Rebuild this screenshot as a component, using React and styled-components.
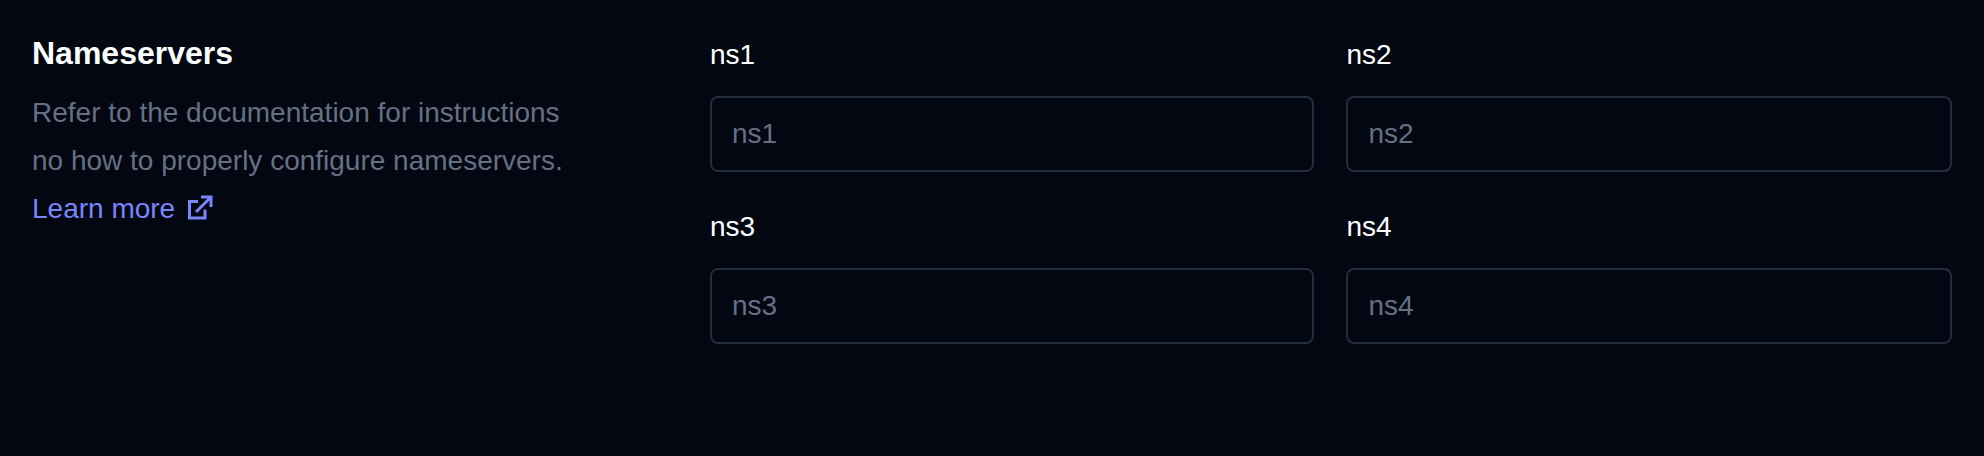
import styled, { createGlobalStyle } from "styled-components";

const GlobalStyle = createGlobalStyle`
  html, body {
    margin: 0;
    background: #020711;
  }
  * {
    box-sizing: border-box;
  }
`;

const Section = styled.section`
  display: grid;
  grid-template-columns: 678px 1fr;
  height: 456px;
  padding: 32px;
  font-family: "Liberation Sans", Arial, sans-serif;
  font-size: 28px;
  background: #020711;
`;

const Intro = styled.div`
  display: flex;
  flex-direction: column;
`;

const Title = styled.h2`
  margin: 0 0 15px;
  font-size: 32px;
  line-height: 42px;
  font-weight: 700;
  color: #ffffff;
`;

const Description = styled.p`
  margin: 0;
  line-height: 48px;
  color: #667084;
`;

const LearnMore = styled.a`
  display: flex;
  align-items: center;
  gap: 11px;
  line-height: 48px;
  color: #7b85fa;
  text-decoration: none;
`;

const Fields = styled.div`
  display: grid;
  grid-template-columns: 604.4px 1fr;
  column-gap: 32px;
  row-gap: 32px;
  align-content: start;
`;

const Field = styled.label`
  display: flex;
  flex-direction: column;
  gap: 18px;
`;

const FieldLabel = styled.span`
  line-height: 46px;
  color: #ffffff;
`;

const Input = styled.input`
  width: 100%;
  height: 76px;
  padding: 0 20px;
  border: 2px solid #222c3d;
  border-radius: 8px;
  background: transparent;
  font: inherit;
  color: #ffffff;

  &::placeholder {
    color: #667084;
    opacity: 1;
  }
`;

const ExternalIcon = () => (
  <svg width="28" height="28" viewBox="0 0 28 28" fill="none" stroke="currentColor" strokeWidth="3">
    <path d="M12 6.5H3.5V23H19v-8.5" />
    <path d="M10 17 25 2" />
    <path d="M15 2h10v10" />
  </svg>
);

const names = ["ns1", "ns2", "ns3", "ns4"];

export default function App() {
  return (
    <>
      <GlobalStyle />
      <Section>
        <Intro>
          <Title>Nameservers</Title>
          <Description>
            Refer to the documentation for instructions
            <br />
            no how to properly configure nameservers.
          </Description>
          <LearnMore href="#">
            Learn more <ExternalIcon />
          </LearnMore>
        </Intro>
        <Fields>
          {names.map((name) => (
            <Field key={name}>
              <FieldLabel>{name}</FieldLabel>
              <Input placeholder={name} />
            </Field>
          ))}
        </Fields>
      </Section>
    </>
  );
}
